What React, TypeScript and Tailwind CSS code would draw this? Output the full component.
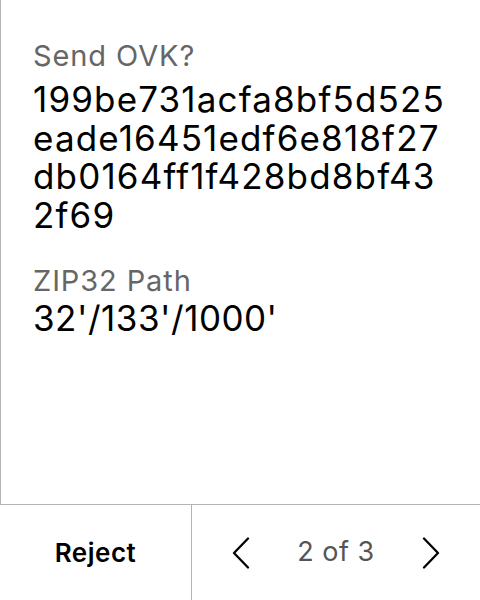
const font = { fontFamily: "Inter, 'Noto Sans', sans-serif" }

const hexLines = ["199be731acfa8bf5d525", "eade16451edf6e818f27", "db0164ff1f428bd8bf43", "2f69"]

function Chevron({ dir }: { dir: "left" | "right" }) {
  return (
    <svg width="18" height="32" viewBox="0 0 18 32" fill="none" stroke="black" strokeWidth="2.3" strokeLinecap="round" strokeLinejoin="round">
      {dir === "left" ? <polyline points="16,1.5 2,16 16,30.5" /> : <polyline points="2,1.5 16,16 2,30.5" />}
    </svg>
  )
}

export default function App() {
  return (
    <div className="w-[480px] h-[600px] flex flex-col bg-white text-black" style={font}>
      <div className="flex-1 border-l border-[#b3b3b3] pl-8 pr-4 pt-[40px]">
        <div className="text-[29px] leading-[32px] tracking-[0.9px] text-[#666]">Send OVK?</div>
        <div className="text-[35px] leading-[38.5px] tracking-[1.15px] mt-[8px]">
          {hexLines.map((l) => (
            <div key={l}>{l}</div>
          ))}
        </div>
        <div className="text-[29px] leading-[32px] tracking-[0.9px] text-[#666] mt-[31px]">ZIP32 Path</div>
        <div className="text-[35px] leading-[38.5px] tracking-[0.5px] mt-[2px]">32'/133'/1000'</div>
      </div>
      <div className="h-[96px] border-t border-[#b3b3b3] flex">
        <div className="w-[192px] border-r border-[#b3b3b3] flex items-center justify-center text-[26px] tracking-[0.5px] font-semibold">
          Reject
        </div>
        <div className="flex-1 flex items-center justify-center gap-[47px]">
          <Chevron dir="left" />
          <span className="text-[27px] tracking-[0.5px] text-[#555]">2 of 3</span>
          <Chevron dir="right" />
        </div>
      </div>
    </div>
  )
}
